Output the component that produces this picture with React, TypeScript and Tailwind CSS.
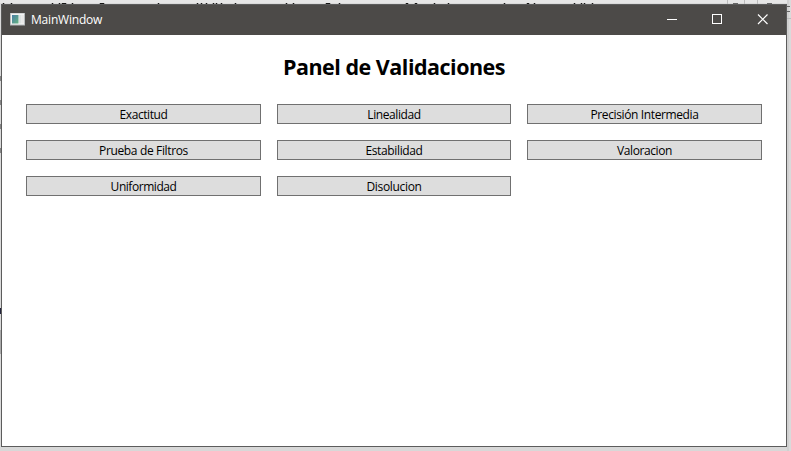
const validations = [
  { name: "Exactitud", spacing: "tracking-[-0.42px]" },
  { name: "Linealidad", spacing: "tracking-[-0.42px]" },
  { name: "Precisión Intermedia", spacing: "tracking-[-0.38px]" },
  { name: "Prueba de Filtros", spacing: "tracking-[-0.35px]" },
  { name: "Estabilidad", spacing: "tracking-[-0.36px]" },
  { name: "Valoracion", spacing: "tracking-[-0.4px]" },
  { name: "Uniformidad", spacing: "tracking-[-0.45px]" },
  { name: "Disolucion", spacing: "tracking-[-0.33px]" },
];

// Tips of the text in the window behind, as [x, width].
const specks = [
  [3, 1], [11, 1], [52, 1], [59, 1], [62, 4], [72, 1], [100, 4], [158, 1], [197, 1], [201, 1],
  [206, 1], [213, 1], [216, 1], [221, 1], [235, 1], [286, 1], [293, 1], [326, 4], [339, 1],
  [406, 2], [415, 2], [434, 1], [448, 1], [504, 1], [527, 2], [534, 1], [574, 1], [581, 1],
  [584, 1], [592, 1],
];

function Backdrop() {
  return (
    <svg className="absolute inset-0" width="791" height="451" shapeRendering="crispEdges">
      <rect width="791" height="451" fill="#dadada" />
      <rect width="791" height="3" fill="#e6e6e6" />
      <rect y="447" width="791" height="4" fill="#d8d8d8" />
      <rect x="787" width="4" height="451" fill="#d0d0d0" />
      <rect x="789" width="2" height="451" fill="#dadada" />
      {specks.map(([x, w]) => (
        <g key={x}>
          <rect x={x - 1} y="3" width={w + 2} height="1" fill="#aaa" />
          <rect x={x} y="3" width={w} height="1" fill="#151515" />
        </g>
      ))}
      <path d="M727.5 0v4M744.5 0v4M757.5 0v4" stroke="#bcbcbc" />
      <path d="M733 3.5h5M767 3.5h5M787 6.5h3M787 11.5h3" stroke="#666" />
      <path d="M787 18.5h4" stroke="#bcbcbc" />
      <path d="M0 76h1v5H0zM0 100h1v5H0zM0 124h1v5H0zM0 148h1v5H0z" fill="#858585" />
      <path d="M0 308h1v6H0z" fill="#24243c" />
      <path d="M0 330h1v24H0z" fill="#aaa" />
    </svg>
  );
}

function AppIcon() {
  return (
    <svg className="ml-2 shrink-0" width="16" height="14" viewBox="0 0 16 14">
      <defs>
        <linearGradient id="pane" x1="0" y1="0" x2="1" y2="1">
          <stop offset="0" stopColor="#4a7fa5" />
          <stop offset="1" stopColor="#65b383" />
        </linearGradient>
      </defs>
      <rect x=".5" y="0" width="14" height="12" fill="#f4f4f4" stroke="#b5babc" />
      <rect x="2" y="2" width="6.5" height="8.5" fill="url(#pane)" />
      <rect x="9" y="2" width="2.5" height="8.5" fill="#dce1e1" />
      <rect x="12" y="2" width="2" height="8.5" fill="#e8e8e8" />
    </svg>
  );
}

export default function App() {
  return (
    <div className="relative h-[451px] w-[791px] overflow-hidden pt-1 pl-px font-['Open_Sans','Noto_Sans',sans-serif]">
      <Backdrop />
      <main className="relative flex h-[443px] w-[786px] flex-col border border-[#5c5c5c] bg-white">
        <header className="flex h-[30px] shrink-0 items-center bg-[#4c4a48] text-white">
          <AppIcon />
          <span className="ml-[5px] flex-1 text-[12px] leading-4 tracking-[-0.2px]">MainWindow</span>
          <svg width="138" height="30" fill="none" stroke="white" shapeRendering="crispEdges">
            <path d="M19 14.5h10M64.5 9.5h9v9h-9z" />
            <path d="m110 9.5 9.5 9.5m0-9.5-9.5 9.5" strokeWidth="1.2" shapeRendering="geometricPrecision" />
          </svg>
        </header>
        <h1 className="mt-4 text-center text-[21.5px] leading-8 font-bold tracking-[-0.5px] text-black">Panel de Validaciones</h1>
        <div className="mt-[21px] ml-6 grid w-[736px] grid-cols-[235px_234px_235px] gap-4">
          {validations.map(({ name, spacing }) => (
            <button
              key={name}
              className={`flex h-5 items-center justify-center border border-[#707070] bg-[#ddd] pt-[2px] text-[12px] leading-4 text-black ${spacing}`}
            >
              {name}
            </button>
          ))}
        </div>
      </main>
    </div>
  );
}
